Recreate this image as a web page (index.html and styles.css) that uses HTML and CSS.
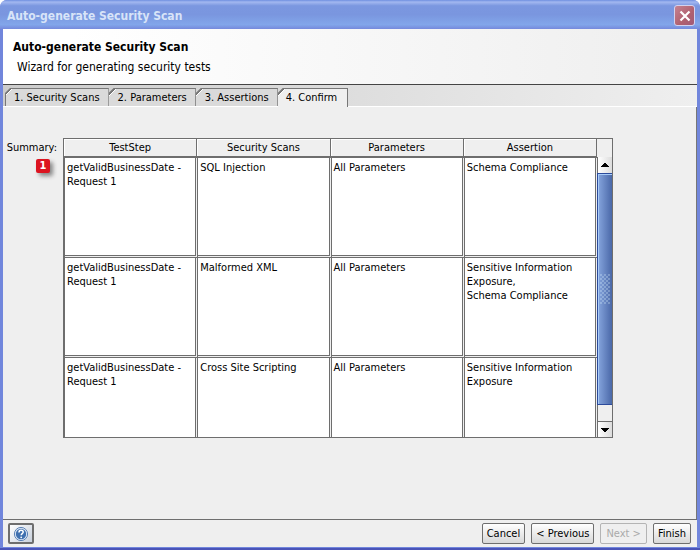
FILE: index.html
```
<!DOCTYPE html>
<html lang="en">
<head>
  <meta charset="UTF-8">
  <meta name="viewport" content="width=device-width, initial-scale=1.0">
  <title>Auto-generate Security Scan</title>
  <link rel="stylesheet" href="styles.css">
</head>
<body>

  <div class="window">
    <div class="titlebar">
      <span class="titlebar-text">Auto-generate Security Scan</span>
      <button class="close" aria-label="Close">
        <svg width="12" height="12" viewBox="0 0 12 12"><path d="M1.5 1.5l9 9M10.5 1.5l-9 9" stroke="#fff" stroke-width="2.2"/></svg>
      </button>
    </div>

    <div class="content">
      <header class="banner">
        <h1>Auto-generate Security Scan</h1>
        <p>Wizard for generating security tests</p>
      </header>

      <!-- Wizard steps -->
      <nav class="tabs">
        <button class="tab">1. Security Scans</button>
        <button class="tab">2. Parameters</button>
        <button class="tab">3. Assertions</button>
        <button class="tab active">4. Confirm</button>
      </nav>

      <main class="page">
        <div class="label">
          <span>Summary:</span>
          <span class="marker">1</span>
        </div>

        <div class="summary">
          <div class="viewport">
            <table>
              <thead>
                <tr><th>TestStep</th><th>Security Scans</th><th>Parameters</th><th>Assertion</th></tr>
              </thead>
              <tbody>
                <tr>
                  <td>getValidBusinessDate -<br>Request 1</td>
                  <td>SQL Injection</td>
                  <td>All Parameters</td>
                  <td>Schema Compliance</td>
                </tr>
                <tr>
                  <td>getValidBusinessDate -<br>Request 1</td>
                  <td>Malformed XML</td>
                  <td>All Parameters</td>
                  <td>Sensitive Information<br>Exposure,<br>Schema Compliance</td>
                </tr>
                <tr>
                  <td>getValidBusinessDate -<br>Request 1</td>
                  <td>Cross Site Scripting</td>
                  <td>All Parameters</td>
                  <td>Sensitive Information<br>Exposure</td>
                </tr>
              </tbody>
            </table>
          </div>
          <div class="scroll">
            <div class="corner"></div>
            <button class="arrow up" aria-label="Scroll up">
              <svg width="8" height="4" viewBox="0 0 8 4" shape-rendering="crispEdges"><path d="M3 0h2v1h1v1h1v1h1v1H0V3h1V2h1V1h1z"/></svg>
            </button>
            <div class="thumb"><div class="grip"></div></div>
            <div class="track"></div>
            <button class="arrow down" aria-label="Scroll down">
              <svg width="8" height="4" viewBox="0 0 8 4" shape-rendering="crispEdges"><path d="M0 0h8v1H7v1H6v1H5v1H3V3H2V2H1V1H0z"/></svg>
            </button>
          </div>
        </div>
      </main>

      <footer class="footer">
        <button class="help" aria-label="Help">
          <svg width="16" height="16" viewBox="0 0 16 16">
            <circle cx="8" cy="8" r="6.6" fill="#dfe9f5" stroke="#5b82b8"/>
            <circle cx="8" cy="8" r="5.2" fill="#3f70b0"/>
            <path d="M6 6.4C6 4.9 7 4.3 8.1 4.3c1.2 0 2.1.7 2.1 1.8 0 1.5-2 1.6-2 3.2" fill="none" stroke="#fff" stroke-width="1.5"/>
            <circle cx="8.2" cy="11.3" r=".9" fill="#fff"/>
          </svg>
        </button>
        <button class="btn">Cancel</button>
        <button class="btn">&lt; Previous</button>
        <button class="btn" disabled>Next &gt;</button>
        <button class="btn">Finish</button>
      </footer>
    </div>
  </div>

</body>
</html>
```

FILE: styles.css
```
* {
  box-sizing: border-box;
}

body {
  margin: 0;
  background: #fff;
  color: #000;
  font-family: "DejaVu Sans Condensed", Tahoma, sans-serif;
  font-size: 11px;
  line-height: 14px;
}

button {
  font: inherit;
  color: inherit;
  padding: 0;
}

.window {
  display: flex;
  flex-direction: column;
  height: 100vh;
  min-height: 480px;
  padding: 0 3px 1px;
  background: #7186dc;
  border-bottom: 2px solid #4a54b8;
  border-radius: 7px 7px 0 0;
  overflow: hidden;
}

.titlebar {
  display: flex;
  align-items: center;
  justify-content: space-between;
  flex: none;
  height: 29px;
  margin: 0 -3px;
  padding: 2px 5px 0 7px;
  background: linear-gradient(#6f8fe0 0, #a3b8f0 7%, #7b97e0 20%, #7a96df 50%, #82a6ea 85%, #7589dc 100%);
}

.titlebar-text {
  color: #d8e4f8;
  font-size: 12px;
  font-weight: bold;
}

.close {
  display: flex;
  align-items: center;
  justify-content: center;
  width: 21px;
  height: 21px;
  border: 1px solid #d3d2ee;
  border-radius: 3px;
  background: linear-gradient(135deg, #c58291, #b0606f 60%, #a05a78);
}

.content {
  display: flex;
  flex-direction: column;
  flex: 1;
  background: #efefef;
}

.banner {
  height: 56px;
  padding: 10px;
  border-bottom: 1px solid #444;
  background: linear-gradient(90deg, #fff 10%, #efefef 95%);
}

.banner h1 {
  margin: 0;
  font-size: 12px;
  line-height: 16px;
}

.banner p {
  margin: 4px 0 0 4px;
  font-size: 12px;
  line-height: 16px;
}

.tabs {
  display: flex;
  align-items: flex-end;
  height: 22px;
  padding-left: 2px;
  background: linear-gradient(90deg, #ccc, #efefef);
  border-bottom: 1px solid #fff;
}

.tab {
  height: 18px;
  padding: 0 8px 0 9px;
  border: 1px solid #777;
  border-width: 1px 1px 0 0;
  background: linear-gradient(135deg, #777 5px, #fff 5px, #fff 6px, #dadada 6px) border-box;
  clip-path: polygon(5px 0, 100% 0, 100% 100%, 0 100%, 0 5px);
}

.tab:first-child {
  padding-left: 8px;
  border-left-width: 1px;
}

.tab.active {
  height: 19px;
  margin-bottom: -1px;
  padding: 0 10px 1px 8px;
  background: linear-gradient(135deg, #777 5px, #fff 5px, #fff 6px, #efefef 6px) border-box;
}

.page {
  display: flex;
  flex: 1;
  align-items: flex-start;
  padding: 31px 83px 20px 6px;
  border-right: 1px solid #777;
}

.label {
  display: flex;
  flex-direction: column;
  align-items: flex-end;
  flex: none;
  width: 54px;
  padding: 3px 6px 0 0;
}

.marker {
  width: 14px;
  margin: 4px 7px 0 0;
  border-radius: 2px;
  background: #dc1420;
  color: #fff;
  font-weight: bold;
  text-align: center;
  box-shadow: 3px 3px 4px #888;
}

.summary {
  display: flex;
  flex: 1;
  height: 300px;
  border: 1px solid #6e6e6e;
}

.viewport {
  flex: 1;
  overflow: hidden;
}

table {
  width: 100%;
  table-layout: fixed;
  border-spacing: 0;
}

th {
  height: 18px;
  padding: 0;
  border: 1px solid #6e6e6e;
  border-width: 0 1px 1px 0;
  font-weight: normal;
  box-shadow: inset 1px 1px #fff;
}

td {
  height: 100px;
  padding: 3px 2px;
  border: 1px solid #6e6e6e;
  border-width: 1px 0 0 1px;
  background: #fff;
  vertical-align: top;
  box-shadow: inset -1px -1px #efefef, inset -2px -2px #6e6e6e;
}

.scroll {
  display: flex;
  flex-direction: column;
  width: 15px;
}

.corner {
  height: 18px;
}

.arrow {
  display: flex;
  align-items: center;
  justify-content: center;
  height: 16px;
  border: 0;
  border-left: 1px solid #6e6e6e;
  background: linear-gradient(90deg, #fff, #dcdcdc);
}

.arrow.down {
  border-top: 1px solid #6e6e6e;
}

.thumb {
  display: flex;
  align-items: center;
  justify-content: center;
  flex: 1;
  border: 1px solid #2c4b9c;
  border-right: 0;
  background: linear-gradient(90deg, #86a5dd, #4a68a8);
  box-shadow: inset 1px 1px #a8ccf8;
}

.grip {
  width: 10px;
  height: 30px;
  background: radial-gradient(circle at 1px 1px, #d8f0ff, transparent 1px) 0 0 / 4px 4px,
    radial-gradient(circle at 1px 1px, #d8f0ff, transparent 1px) 2px 2px / 4px 4px;
}

.track {
  height: 16px;
  border-left: 1px solid #6e6e6e;
}

.footer {
  display: flex;
  align-items: center;
  gap: 6px;
  height: 28px;
  padding: 0 6px 0 5px;
  border-top: 1px solid #6e6e6e;
}

.btn,
.help {
  height: 21px;
  border: 1px solid #6e6e6e;
  border-radius: 2px;
  background: linear-gradient(#fff, #d8d8d8);
}

.btn {
  padding: 0 4px;
}

.btn:disabled {
  padding: 0 5px;
  border-color: #b4b4b4;
  background: #efefef;
  color: #aaa;
}

.help {
  display: flex;
  align-items: center;
  justify-content: center;
  width: 26px;
  margin-right: auto;
  border-width: 2px;
  background: linear-gradient(135deg, #fff, #c8d0dc);
}
```
